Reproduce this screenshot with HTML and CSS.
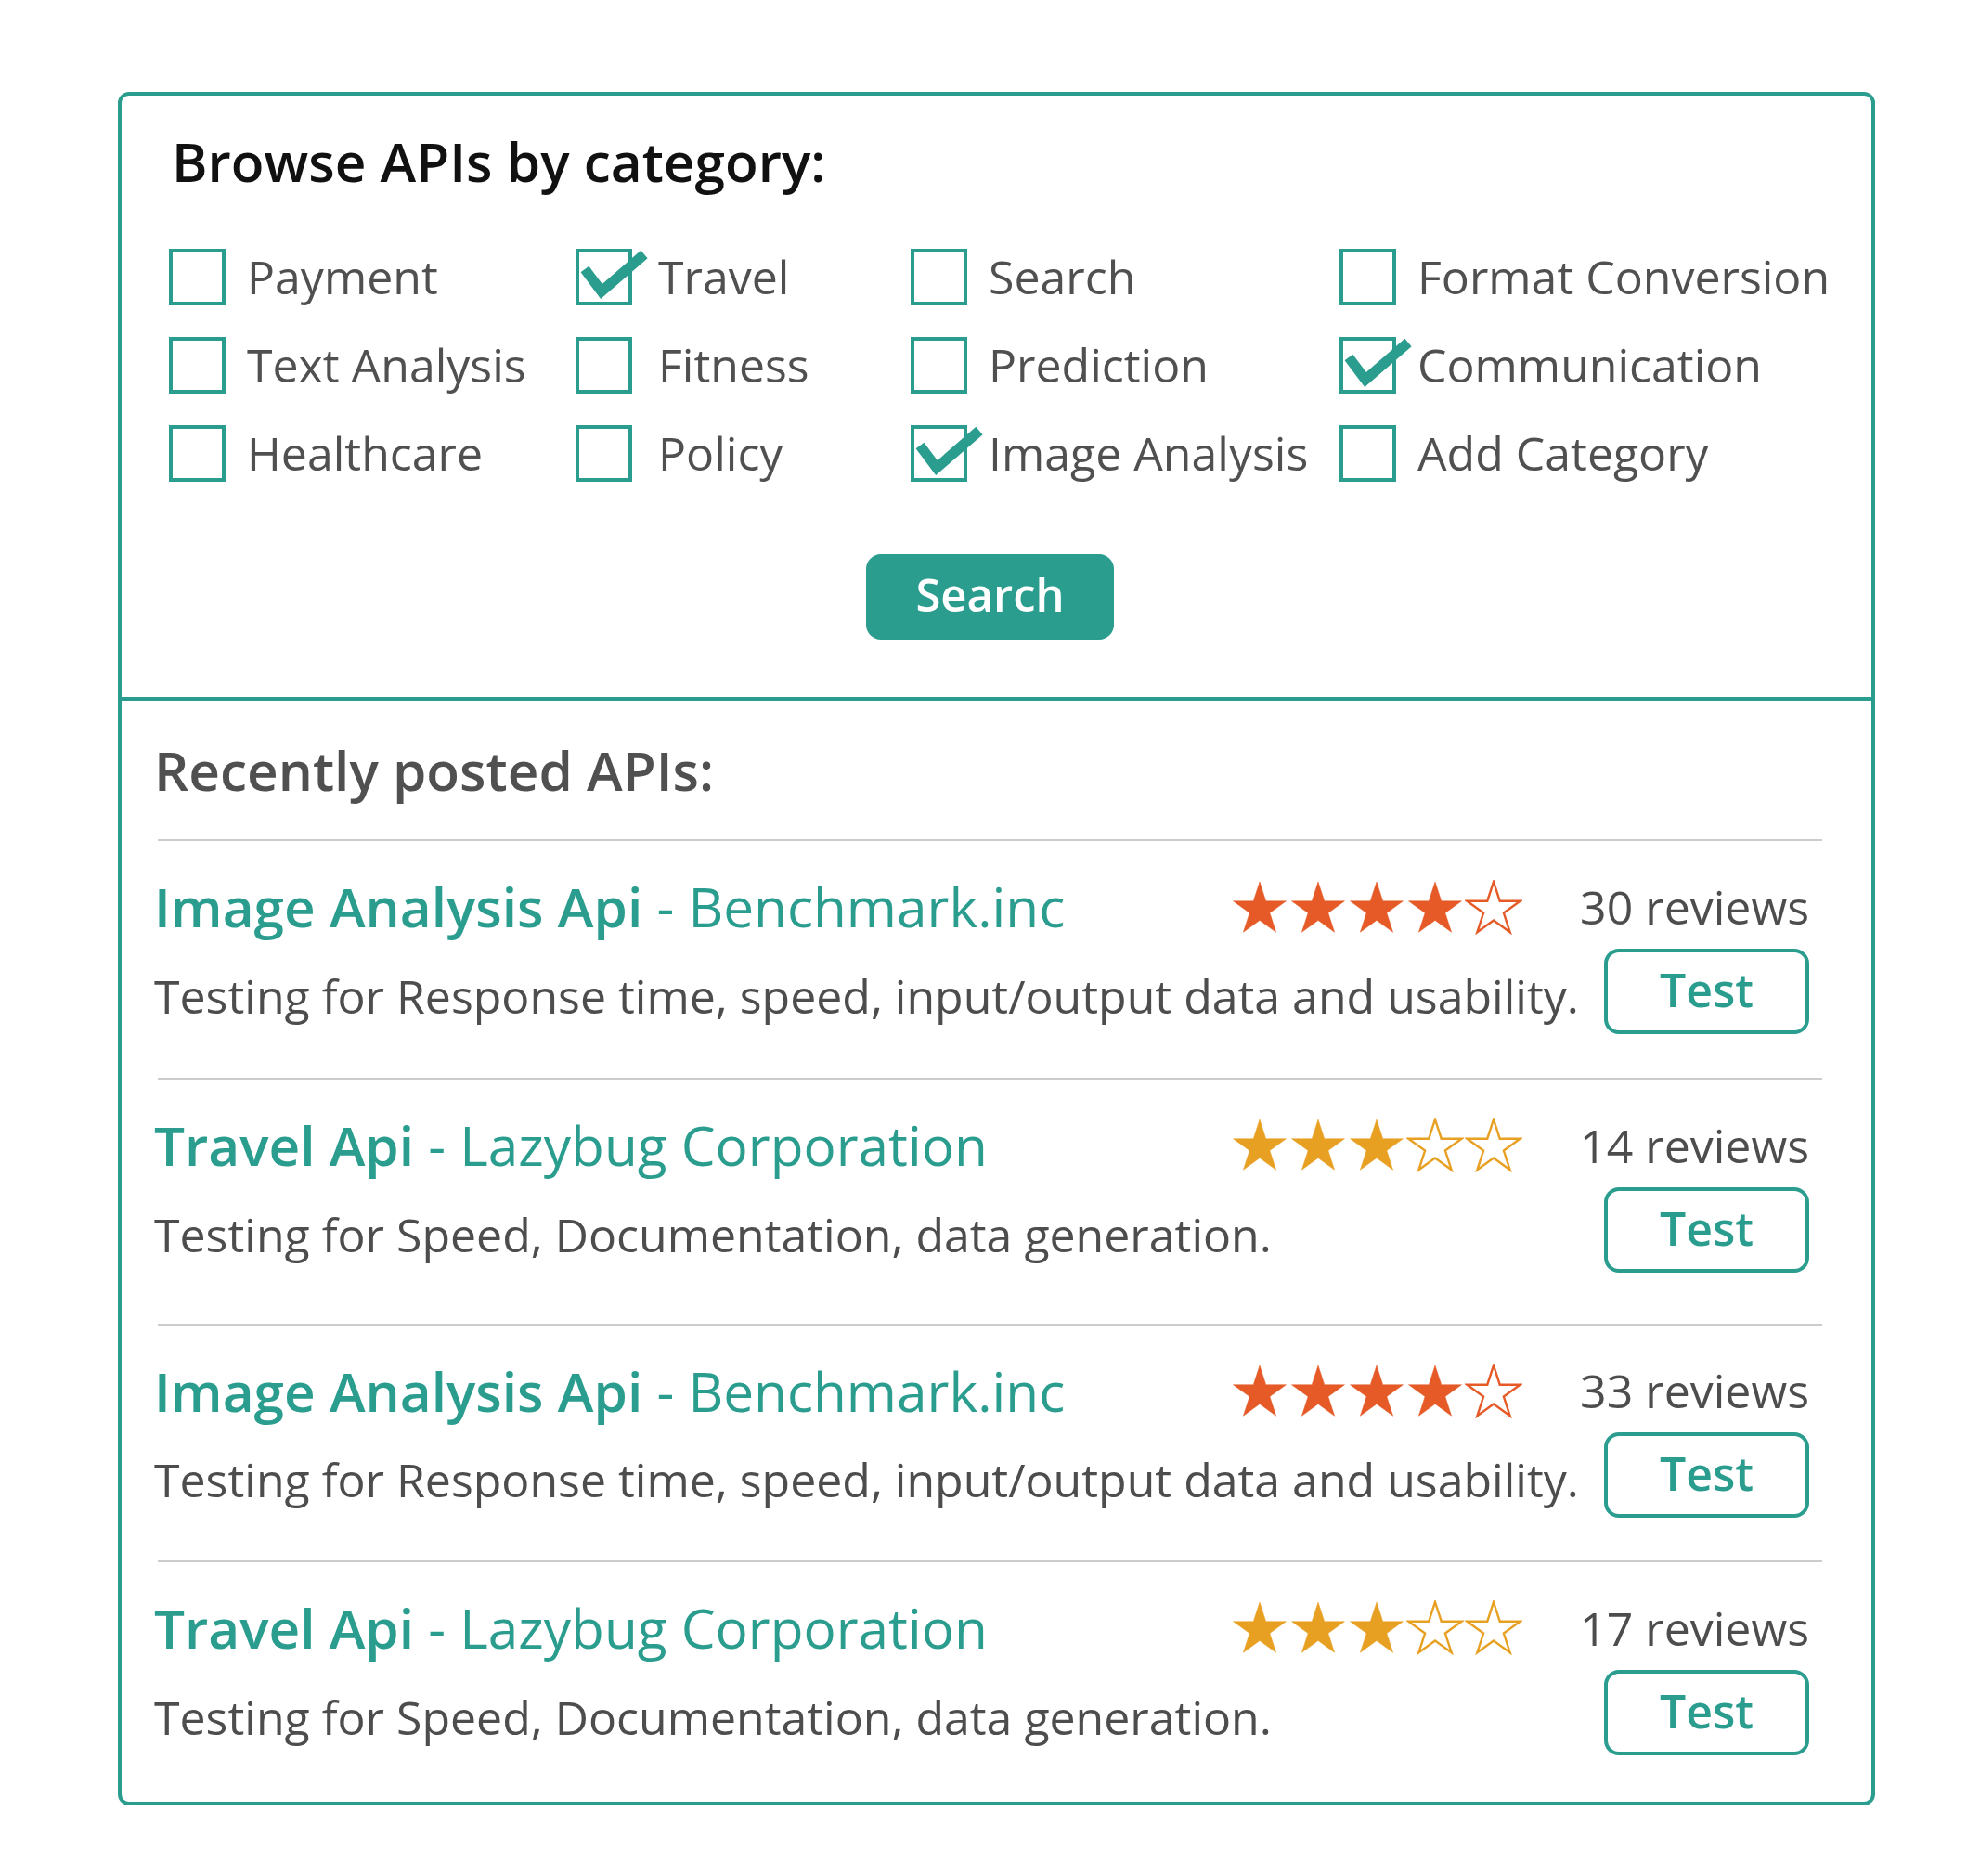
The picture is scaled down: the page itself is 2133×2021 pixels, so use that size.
FILE: index.html
```html
<!DOCTYPE html>
<html lang="en">
<head>
<meta charset="utf-8">
<title>Browse APIs</title>
<link rel="stylesheet" href="styles.css">
</head>
<body>
<svg class="defs" width="0" height="0" aria-hidden="true">
  <defs>
    <symbol id="star-shape" viewBox="-2 -2 62 59">
      <polygon points="29,0 35.74,20.73 57.53,20.73 39.9,33.54 46.63,54.27 29,41.46 11.37,54.27 18.1,33.54 0.47,20.73 22.26,20.73"/>
    </symbol>
    <symbol id="tick-shape" viewBox="0 0 85 61">
      <polyline points="10,22 28,46 74,6"/>
    </symbol>
  </defs>
</svg>

<div class="card">
  <section class="browse">
    <h1 class="browse-title">Browse APIs by category:</h1>
    <div class="cat-grid">
      <div class="cat"><span class="box"></span><span class="cat-label">Payment</span></div>
      <div class="cat"><span class="box"><svg class="tick"><use href="#tick-shape"/></svg></span><span class="cat-label">Travel</span></div>
      <div class="cat"><span class="box"></span><span class="cat-label">Search</span></div>
      <div class="cat"><span class="box"></span><span class="cat-label">Format Conversion</span></div>

      <div class="cat"><span class="box"></span><span class="cat-label">Text Analysis</span></div>
      <div class="cat"><span class="box"></span><span class="cat-label">Fitness</span></div>
      <div class="cat"><span class="box"></span><span class="cat-label">Prediction</span></div>
      <div class="cat"><span class="box"><svg class="tick"><use href="#tick-shape"/></svg></span><span class="cat-label">Communication</span></div>

      <div class="cat"><span class="box"></span><span class="cat-label">Healthcare</span></div>
      <div class="cat"><span class="box"></span><span class="cat-label">Policy</span></div>
      <div class="cat"><span class="box"><svg class="tick"><use href="#tick-shape"/></svg></span><span class="cat-label">Image Analysis</span></div>
      <div class="cat"><span class="box"></span><span class="cat-label">Add Category</span></div>
    </div>
    <div class="search-row"><button class="search-btn">Search</button></div>
  </section>

  <section class="recent">
    <h2 class="recent-title">Recently posted APIs:</h2>
    <ul class="api-list">
      <li class="api">
        <div class="api-top">
          <div class="api-name"><span class="api-strong">Image Analysis Api</span> - Benchmark.inc</div>
          <div class="stars rating-4">
            <svg class="star full"><use href="#star-shape"/></svg>
            <svg class="star full"><use href="#star-shape"/></svg>
            <svg class="star full"><use href="#star-shape"/></svg>
            <svg class="star full"><use href="#star-shape"/></svg>
            <svg class="star empty"><use href="#star-shape"/></svg>
          </div>
          <div class="reviews">30 reviews</div>
        </div>
        <div class="api-bottom">
          <p class="desc">Testing for Response time, speed, input/output data and usability.</p>
          <button class="test-btn">Test</button>
        </div>
      </li>
      <li class="api">
        <div class="api-top">
          <div class="api-name"><span class="api-strong">Travel Api</span> - Lazybug Corporation</div>
          <div class="stars rating-3">
            <svg class="star full"><use href="#star-shape"/></svg>
            <svg class="star full"><use href="#star-shape"/></svg>
            <svg class="star full"><use href="#star-shape"/></svg>
            <svg class="star empty"><use href="#star-shape"/></svg>
            <svg class="star empty"><use href="#star-shape"/></svg>
          </div>
          <div class="reviews">14 reviews</div>
        </div>
        <div class="api-bottom">
          <p class="desc">Testing for Speed, Documentation, data generation.</p>
          <button class="test-btn">Test</button>
        </div>
      </li>
      <li class="api">
        <div class="api-top">
          <div class="api-name"><span class="api-strong">Image Analysis Api</span> - Benchmark.inc</div>
          <div class="stars rating-4">
            <svg class="star full"><use href="#star-shape"/></svg>
            <svg class="star full"><use href="#star-shape"/></svg>
            <svg class="star full"><use href="#star-shape"/></svg>
            <svg class="star full"><use href="#star-shape"/></svg>
            <svg class="star empty"><use href="#star-shape"/></svg>
          </div>
          <div class="reviews">33 reviews</div>
        </div>
        <div class="api-bottom">
          <p class="desc">Testing for Response time, speed, input/output data and usability.</p>
          <button class="test-btn">Test</button>
        </div>
      </li>
      <li class="api">
        <div class="api-top">
          <div class="api-name"><span class="api-strong">Travel Api</span> - Lazybug Corporation</div>
          <div class="stars rating-3">
            <svg class="star full"><use href="#star-shape"/></svg>
            <svg class="star full"><use href="#star-shape"/></svg>
            <svg class="star full"><use href="#star-shape"/></svg>
            <svg class="star empty"><use href="#star-shape"/></svg>
            <svg class="star empty"><use href="#star-shape"/></svg>
          </div>
          <div class="reviews">17 reviews</div>
        </div>
        <div class="api-bottom">
          <p class="desc">Testing for Speed, Documentation, data generation.</p>
          <button class="test-btn">Test</button>
        </div>
      </li>
    </ul>
  </section>
</div>
</body>
</html>
```

FILE: styles.css
```css
* {
  box-sizing: border-box;
}

html, body {
  margin: 0;
  padding: 0;
  background: #ffffff;
}

body {
  font-family: "Open Sans", "Noto Sans", sans-serif;
}

.defs {
  position: absolute;
  width: 0;
  height: 0;
  overflow: hidden;
}

.card {
  width: 1893px;
  margin: 99px 0 0 127px;
  border: 4px solid #2a9d8f;
  border-radius: 12px;
  background: #ffffff;
}

/* ---------- browse section ---------- */
.browse {
  padding: 35px 51px 62px 51px;
  border-bottom: 4px solid #2a9d8f;
}

.browse-title {
  margin: 0 0 60px 0;
  padding-left: 3px;
  font-size: 58.5px;
  font-weight: 600;
  line-height: 1.2;
  color: #111111;
}

.cat-grid {
  display: grid;
  grid-template-columns: 438px 361px 462px auto;
  row-gap: 34px;
}

.cat {
  display: flex;
  align-items: center;
  gap: 23px;
  height: 61px;
  white-space: nowrap;
}

.cat:nth-child(4n+2) {
  gap: 28px;
}

.box {
  position: relative;
  flex: none;
  width: 61px;
  height: 61px;
  border: 4px solid #2a9d8f;
}

.tick {
  position: absolute;
  left: -4px;
  top: -4px;
  width: 85px;
  height: 61px;
  overflow: visible;
  fill: none;
  stroke: #2a9d8f;
  stroke-width: 11;
  stroke-linejoin: miter;
  stroke-linecap: butt;
}

.cat-label {
  font-size: 50px;
  line-height: 61px;
  color: #505050;
}

.search-row {
  display: flex;
  justify-content: center;
  margin-top: 78px;
  padding-right: 14px;
}

.search-btn {
  width: 267px;
  height: 92px;
  border: 0;
  border-radius: 16px;
  background: #2a9d8f;
  color: #ffffff;
  font-family: "Open Sans", "Noto Sans", sans-serif;
  font-size: 49px;
  font-weight: 600;
  line-height: 1;
  padding: 0 0 6px 0;
}

/* ---------- recent section ---------- */
.recent {
  padding: 39px 53px 0 35px;
}

.recent-title {
  margin: 0 0 40px 0;
  font-size: 58.5px;
  font-weight: 600;
  line-height: 1.2;
  color: #505050;
}

.api-list {
  list-style: none;
  margin: 0;
  padding: 0;
}

.api {
  padding: 38px 14px 47px 0;
  background-image: linear-gradient(#cccccc, #cccccc);
  background-repeat: no-repeat;
  background-position: right top;
  background-size: calc(100% - 4px) 2px;
}

.api:nth-child(1) {
  padding-bottom: 47px;
}

.api:nth-child(2) {
  padding-bottom: 55px;
}

.api:nth-child(3) {
  padding-bottom: 46px;
}

.api:nth-child(4) {
  padding-bottom: 50px;
}

.api-top {
  display: flex;
  align-items: center;
}

.api-name {
  flex: 1;
  font-size: 58.5px;
  line-height: 69.6px;
  color: #2a9d8f;
  white-space: nowrap;
}

.api-strong {
  font-weight: 600;
}

.stars {
  display: flex;
  gap: 1px;
}

.rating-4 {
  color: #e55a27;
}

.rating-3 {
  color: #e8a023;
}

.star {
  width: 62px;
  height: 59px;
}

.star.full {
  fill: currentColor;
  stroke: currentColor;
  stroke-width: 0.5;
}

.star.empty {
  fill: #ffffff;
  stroke: currentColor;
  stroke-width: 2.4;
}

.reviews {
  margin-left: 62px;
  font-size: 50px;
  line-height: 1.2;
  color: #4d4d4d;
  white-space: nowrap;
}

.api-bottom {
  display: flex;
  align-items: center;
  margin-top: 10px;
}

.desc {
  flex: 1;
  margin: 0;
  padding-top: 10px;
  font-size: 50px;
  line-height: 1.2;
  color: #4d4d4d;
  white-space: nowrap;
}

.test-btn {
  flex: none;
  width: 221px;
  height: 92px;
  border: 4px solid #2a9d8f;
  border-radius: 16px;
  background: #ffffff;
  color: #2a9d8f;
  font-family: "Open Sans", "Noto Sans", sans-serif;
  font-size: 50px;
  font-weight: 600;
  line-height: 1;
  padding: 0 0 4px 0;
}
```
